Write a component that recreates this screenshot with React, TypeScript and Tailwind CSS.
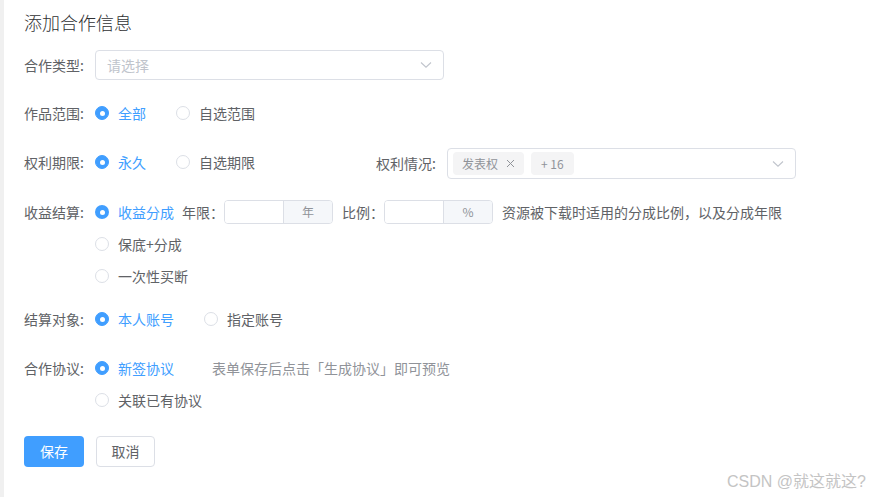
const FONT = `font-["Noto_Sans_CJK_SC","Noto_Sans",sans-serif]`;

function Radio({ checked, label }: { checked?: boolean; label: string }) {
	return (
		<span className="inline-flex items-center mr-[30px]">
			{checked ? (
				<span className="w-[14px] h-[14px] rounded-full bg-[#409eff] border border-[#409eff] flex items-center justify-center">
					<span className="w-[5px] h-[5px] rounded-full bg-white" />
				</span>
			) : (
				<span className="w-[14px] h-[14px] rounded-full bg-white border border-[#dcdfe6]" />
			)}
			<span className={`ml-[9px] text-[14px] leading-none ${checked ? "text-[#409eff]" : "text-[#606266]"}`}>
				{label}
			</span>
		</span>
	);
}

function Chevron() {
	return (
		<svg width="12" height="8" viewBox="0 0 12 8" fill="none">
			<path d="M1 1.5 L6 6.2 L11 1.5" stroke="#c0c4cc" strokeWidth="1.1" />
		</svg>
	);
}

function Label({ text }: { text: string }) {
	return <div className="w-[71px] shrink-0 text-[14px] text-[#606266]">{text}</div>;
}

function Tag({ children }: { children: React.ReactNode }) {
	return (
		<span className="h-[23px] px-[9px] rounded-[4px] bg-[#f4f4f5] text-[#909399] text-[12px] flex items-center gap-[8px]">
			{children}
		</span>
	);
}

function AddonInput({ unit }: { unit: string }) {
	return (
		<div className="flex h-[24px] w-[109px] border border-[#dcdfe6] rounded-[4px] overflow-hidden">
			<div className="w-[58px] bg-white" />
			<div className="flex-1 bg-[#f5f7fa] border-l border-[#dcdfe6] flex items-center justify-center text-[12px] text-[#909399]">
				{unit}
			</div>
		</div>
	);
}

export default function App() {
	return (
		<div className={`relative w-[869px] h-[497px] bg-white flex ${FONT}`}>
			<div className="w-[4px] shrink-0 bg-[#f0f0f0]" />
			<div className="flex-1 pl-[20px] pt-[10px]">
				<div className="h-[24px] leading-[24px] text-[18px] font-light text-[#303133]">添加合作信息</div>

				{/* 合作类型 */}
				<div className="mt-[16px] h-[30px] flex items-center">
					<Label text="合作类型:" />
					<div className="w-[349px] h-[30px] border border-[#dcdfe6] rounded-[4px] flex items-center justify-between pl-[11px] pr-[11px]">
						<span className="text-[14px] text-[#c0c4cc]">请选择</span>
						<Chevron />
					</div>
				</div>

				{/* 作品范围 */}
				<div className="mt-[18px] h-[30px] flex items-center">
					<Label text="作品范围:" />
					<Radio checked label="全部" />
					<Radio label="自选范围" />
				</div>

				{/* 权利期限 / 权利情况 */}
				<div className="mt-[20px] h-[31px] flex items-center">
					<div className="w-[352px] flex items-center -mt-[3px]">
						<Label text="权利期限:" />
						<Radio checked label="永久" />
						<Radio label="自选期限" />
					</div>
					<Label text="权利情况:" />
					<div className="w-[349px] h-[31px] border border-[#dcdfe6] rounded-[4px] flex items-center justify-between pl-[5px] pr-[11px]">
						<div className="flex items-center gap-[7px]">
							<Tag>
								发表权
								<svg width="9" height="9" viewBox="0 0 9 9">
									<path d="M1 1 L8 8 M8 1 L1 8" stroke="#909399" strokeWidth="1" />
								</svg>
							</Tag>
							<Tag>
								<span className="px-[1px]">+&nbsp;16</span>
							</Tag>
						</div>
						<Chevron />
					</div>
				</div>

				{/* 收益结算 */}
				<div className="mt-[17px] flex">
					<div className="h-[32px] flex items-center">
						<Label text="收益结算:" />
					</div>
					<div className="flex flex-col">
						<div className="h-[32px] flex items-center">
							<span className="inline-flex items-center">
								<span className="w-[14px] h-[14px] rounded-full bg-[#409eff] flex items-center justify-center">
									<span className="w-[5px] h-[5px] rounded-full bg-white" />
								</span>
								<span className="ml-[9px] text-[14px] text-[#409eff]">收益分成</span>
							</span>
							<span className="ml-[8px] text-[14px] text-[#606266]">年限：</span>
							<AddonInput unit="年" />
							<span className="ml-[9px] text-[14px] text-[#606266]">比例：</span>
							<AddonInput unit="%" />
							<span className="ml-[9px] text-[14px] text-[#606266]">资源被下载时适用的分成比例，以及分成年限</span>
						</div>
						<div className="h-[32px] flex items-center">
							<Radio label="保底+分成" />
						</div>
						<div className="h-[32px] flex items-center">
							<Radio label="一次性买断" />
						</div>
					</div>
				</div>

				{/* 结算对象 */}
				<div className="mt-[12px] h-[30px] flex items-center">
					<Label text="结算对象:" />
					<Radio checked label="本人账号" />
					<Radio label="指定账号" />
				</div>

				{/* 合作协议 */}
				<div className="mt-[18px] flex">
					<div className="h-[32px] flex items-center">
						<Label text="合作协议:" />
					</div>
					<div className="flex flex-col">
						<div className="h-[32px] flex items-center">
							<Radio checked label="新签协议" />
							<span className="ml-[8px] text-[14px] text-[#909399]">表单保存后点击「生成协议」即可预览</span>
						</div>
						<div className="h-[32px] flex items-center">
							<Radio label="关联已有协议" />
						</div>
					</div>
				</div>

				{/* 按钮 */}
				<div className="mt-[20px] flex gap-[12px]">
					<button className="w-[60px] h-[31px] rounded-[4px] bg-[#409eff] text-white text-[14px]">保存</button>
					<button className="w-[59px] h-[31px] rounded-[4px] border border-[#dcdfe6] bg-white text-[#606266] text-[14px]">
						取消
					</button>
				</div>
			</div>

			<div className='absolute right-[3px] bottom-[7px] text-[16px] text-[#c4c4c4] leading-none font-["Liberation_Sans","Noto_Sans_CJK_SC",sans-serif]'>
				CSDN @就这就这?
			</div>
		</div>
	);
}
